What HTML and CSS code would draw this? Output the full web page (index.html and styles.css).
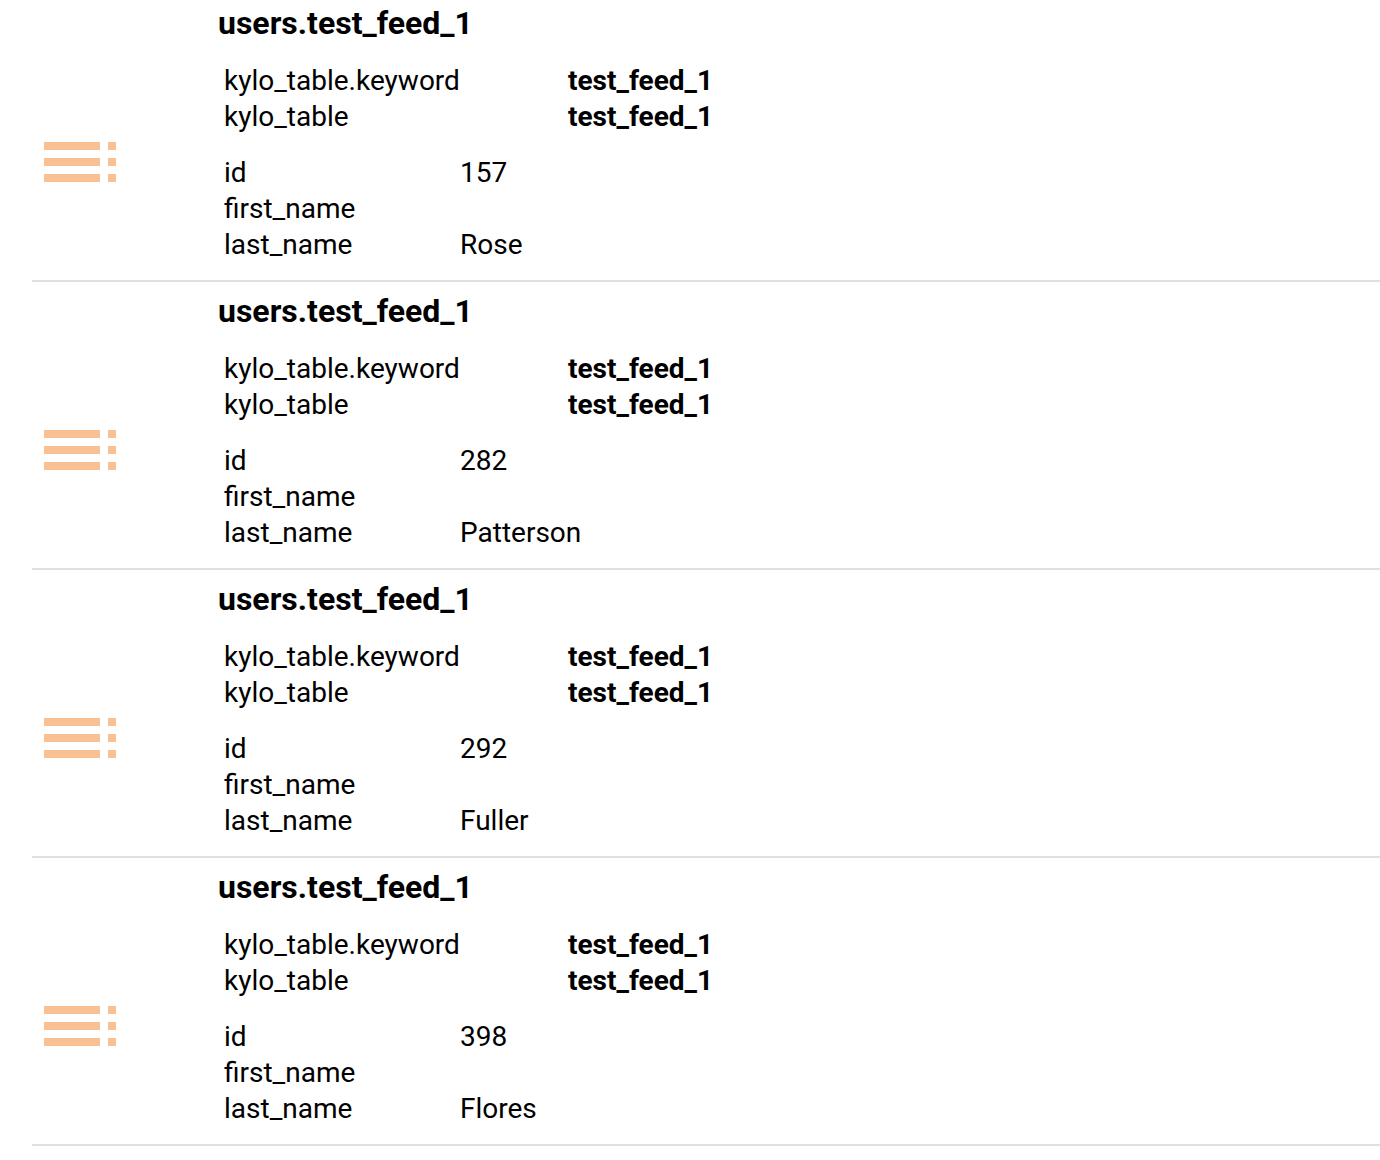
FILE: index.html
```html
<!DOCTYPE html>
<html lang="en">
<head>
<meta charset="utf-8">
<meta name="viewport" content="width=device-width, initial-scale=1">
<title>Search results</title>
<link rel="stylesheet" href="styles.css">
</head>
<body>
<main class="results">
  <article class="result">
    <svg class="result-icon" viewBox="0 0 24 24" aria-hidden="true"><path d="M3 9h14V7H3v2zm0 4h14v-2H3v2zm0 4h14v-2H3v2zm16 0h2v-2h-2v2zm0-10v2h2V7h-2zm0 6h2v-2h-2v2z"/></svg>
    <div class="result-body">
      <h2 class="result-title">users.test_feed_1</h2>
      <table class="fields matches">
        <tr><th scope="row">kylo_table.keyword</th><td>test_feed_1</td></tr>
        <tr><th scope="row">kylo_table</th><td>test_feed_1</td></tr>
      </table>
      <table class="fields values">
        <tr><th scope="row">id</th><td>157</td></tr>
        <tr><th scope="row">first_name</th><td></td></tr>
        <tr><th scope="row">last_name</th><td>Rose</td></tr>
      </table>
    </div>
  </article>
  <article class="result">
    <svg class="result-icon" viewBox="0 0 24 24" aria-hidden="true"><path d="M3 9h14V7H3v2zm0 4h14v-2H3v2zm0 4h14v-2H3v2zm16 0h2v-2h-2v2zm0-10v2h2V7h-2zm0 6h2v-2h-2v2z"/></svg>
    <div class="result-body">
      <h2 class="result-title">users.test_feed_1</h2>
      <table class="fields matches">
        <tr><th scope="row">kylo_table.keyword</th><td>test_feed_1</td></tr>
        <tr><th scope="row">kylo_table</th><td>test_feed_1</td></tr>
      </table>
      <table class="fields values">
        <tr><th scope="row">id</th><td>282</td></tr>
        <tr><th scope="row">first_name</th><td></td></tr>
        <tr><th scope="row">last_name</th><td>Patterson</td></tr>
      </table>
    </div>
  </article>
  <article class="result">
    <svg class="result-icon" viewBox="0 0 24 24" aria-hidden="true"><path d="M3 9h14V7H3v2zm0 4h14v-2H3v2zm0 4h14v-2H3v2zm16 0h2v-2h-2v2zm0-10v2h2V7h-2zm0 6h2v-2h-2v2z"/></svg>
    <div class="result-body">
      <h2 class="result-title">users.test_feed_1</h2>
      <table class="fields matches">
        <tr><th scope="row">kylo_table.keyword</th><td>test_feed_1</td></tr>
        <tr><th scope="row">kylo_table</th><td>test_feed_1</td></tr>
      </table>
      <table class="fields values">
        <tr><th scope="row">id</th><td>292</td></tr>
        <tr><th scope="row">first_name</th><td></td></tr>
        <tr><th scope="row">last_name</th><td>Fuller</td></tr>
      </table>
    </div>
  </article>
  <article class="result">
    <svg class="result-icon" viewBox="0 0 24 24" aria-hidden="true"><path d="M3 9h14V7H3v2zm0 4h14v-2H3v2zm0 4h14v-2H3v2zm16 0h2v-2h-2v2zm0-10v2h2V7h-2zm0 6h2v-2h-2v2z"/></svg>
    <div class="result-body">
      <h2 class="result-title">users.test_feed_1</h2>
      <table class="fields matches">
        <tr><th scope="row">kylo_table.keyword</th><td>test_feed_1</td></tr>
        <tr><th scope="row">kylo_table</th><td>test_feed_1</td></tr>
      </table>
      <table class="fields values">
        <tr><th scope="row">id</th><td>398</td></tr>
        <tr><th scope="row">first_name</th><td></td></tr>
        <tr><th scope="row">last_name</th><td>Flores</td></tr>
      </table>
    </div>
  </article>
</main>
</body>
</html>
```
FILE: styles.css
```css
* {
  box-sizing: border-box;
}

body {
  margin: 0;
  background: #fff;
  color: #000;
  font-family: Roboto, "Liberation Sans", sans-serif;
  font-size: 28px;
  line-height: 36px;
}

.results {
  padding-left: 32px;
}

.result {
  display: flex;
  align-items: flex-end;
  gap: 90px;
  padding: 11px 0 17px;
  border-bottom: 2px solid #e0e0e0;
}

.result:first-child {
  padding-top: 5px;
}

.result-icon {
  flex: none;
  width: 96px;
  height: 96px;
  margin-bottom: 53px;
  fill: #f9c093;
}

.result-body {
  flex: 1;
  min-width: 0;
}

.result-title {
  margin: 0 0 22px;
  font-size: 32px;
  line-height: 36px;
  font-weight: 700;
}

.fields {
  margin-left: 6px;
  border-collapse: collapse;
  table-layout: fixed;
  width: 600px;
}

.fields th,
.fields td {
  height: 36px;
  padding: 0;
  text-align: left;
  font-weight: 400;
}

.matches th {
  width: 344px;
}

.matches td {
  font-weight: 700;
}

.values {
  margin-top: 20px;
}

.values th {
  width: 236px;
}
```
